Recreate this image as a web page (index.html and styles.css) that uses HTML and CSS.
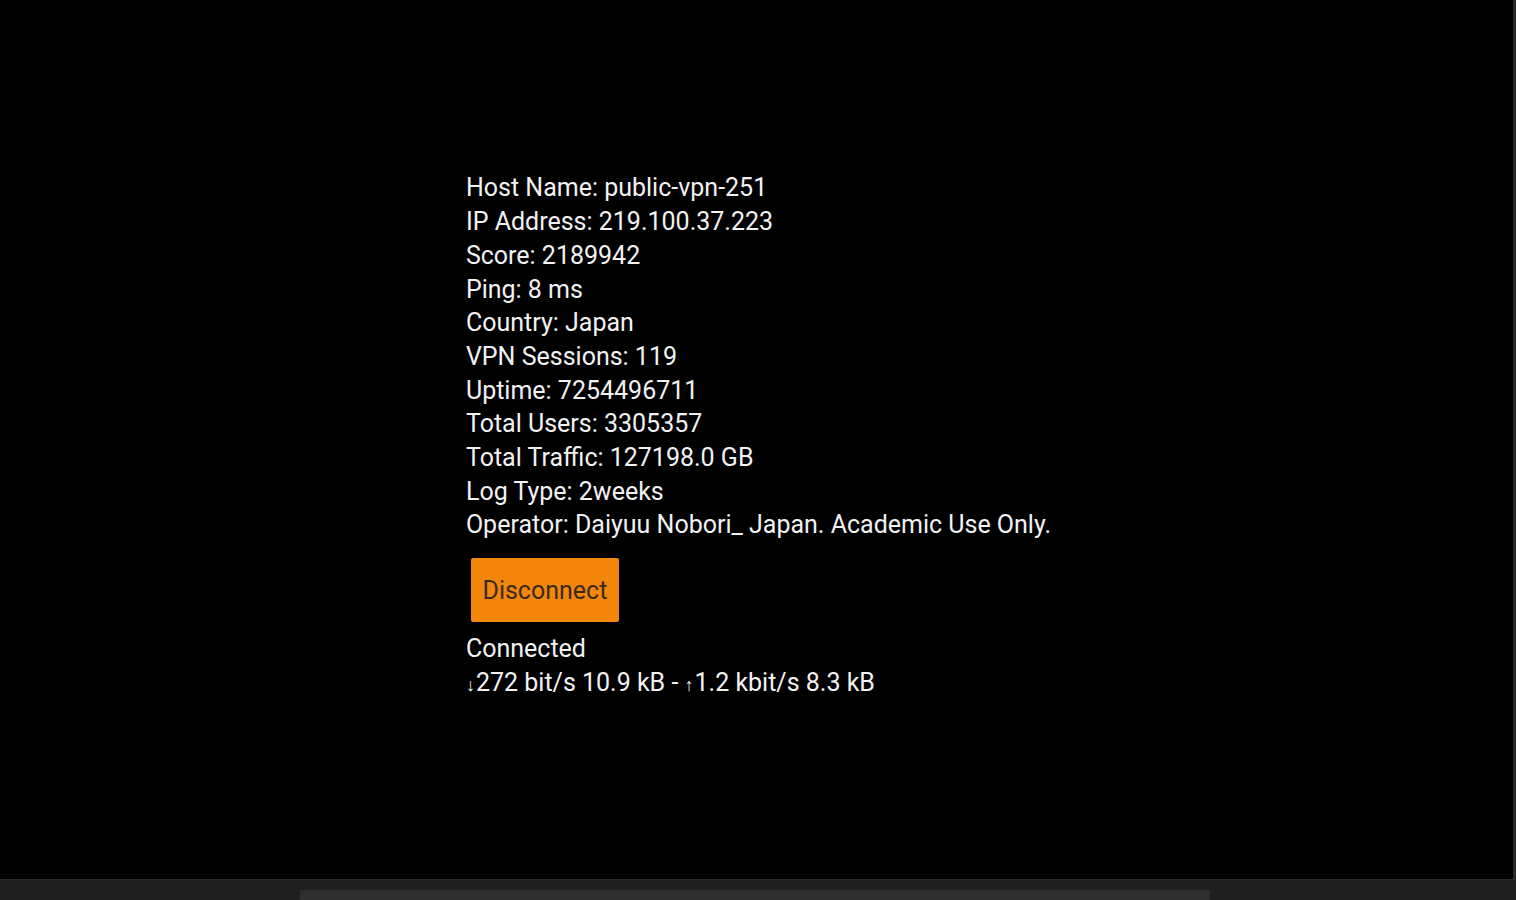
FILE: index.html
```html
<!DOCTYPE html>
<html lang="en">
<head>
    <meta charset="UTF-8">
    <title>VPN Server</title>
    <link rel="stylesheet" href="styles.css">
</head>
<body>
    <div class="screen">
        <div class="info">
            <div class="line">Host Name: public-vpn-251</div>
            <div class="line">IP Address: 219.100.37.223</div>
            <div class="line">Score: 2189942</div>
            <div class="line">Ping: 8 ms</div>
            <div class="line">Country: Japan</div>
            <div class="line">VPN Sessions: 119</div>
            <div class="line">Uptime: 7254496711</div>
            <div class="line">Total Users: 3305357</div>
            <div class="line">Total Traffic: 127198.0 GB</div>
            <div class="line">Log Type: 2weeks</div>
            <div class="line">Operator: Daiyuu Nobori_ Japan. Academic Use Only.</div>
            <button class="disconnect">Disconnect</button>
            <div class="line">Connected</div>
            <div class="line"><span class="arrow">↓</span>272 bit/s 10.9 kB - <span class="arrow">↑</span>1.2 kbit/s 8.3 kB</div>
        </div>
    </div>
    <div class="scrollbar">
        <div class="thumb"></div>
    </div>
</body>
</html>
```

FILE: styles.css
```css
html, body {
    margin: 0;
    padding: 0;
    height: 100%;
    background: #000;
    overflow: hidden;
}
body {
    font-family: Roboto, "Noto Sans", sans-serif;
    color: #f2f2f2;
    display: flex;
    flex-direction: column;
}
.screen {
    flex: 1;
    display: flex;
    justify-content: center;
    align-items: center;
    border-right: 3px solid #2a2a2a;
}
.info {
    display: flex;
    flex-direction: column;
    align-items: flex-start;
    font-size: 25px;
    padding: 0 0 6px 4px;
}
.line {
    line-height: 33.7px;
    white-space: nowrap;
}
.arrow {
    font-size: 18px;
    margin-right: 1px;
}
.disconnect {
    margin: 16px 0 10px 5px;
    width: 148px;
    height: 64px;
    border: none;
    border-radius: 2px;
    background: #f5860c;
    color: #3a2a18;
    font-family: Roboto, "Noto Sans", sans-serif;
    font-size: 25px;
    padding: 0;
}
.scrollbar {
    height: 20px;
    background: #1f1f1f;
    border-top: 1px solid #2a2a2a;
    display: flex;
    align-items: flex-end;
}
.thumb {
    margin-left: 300px;
    width: 910px;
    height: 10px;
    background: #2f2f2f;
}
```
